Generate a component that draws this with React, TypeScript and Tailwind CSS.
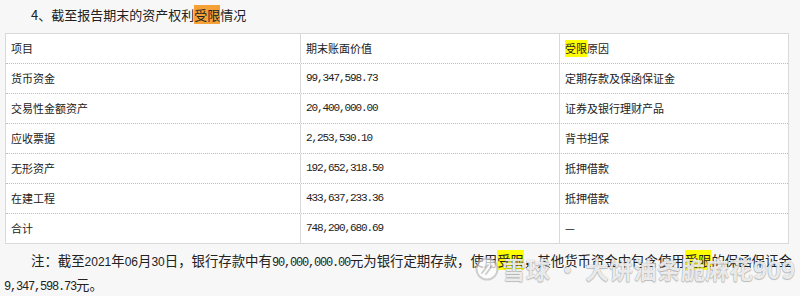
const rows = [
  { item: '货币资金', value: '99,347,598.73', reason: '定期存款及保函保证金' },
  { item: '交易性金额资产', value: '20,400,000.00', reason: '证券及银行理财产品' },
  { item: '应收票据', value: '2,253,530.10', reason: '背书担保' },
  { item: '无形资产', value: '192,652,318.50', reason: '抵押借款' },
  { item: '在建工程', value: '433,637,233.36', reason: '抵押借款' },
  { item: '合计', value: '748,290,680.69', reason: '—' },
];

const cjk = "font-['SimSun','Noto_Sans_CJK_SC',sans-serif]";
const mono = "font-['Liberation_Mono','Noto_Sans_CJK_SC',monospace]";
const narrow = "font-['Liberation_Sans',sans-serif] text-[12px]";

function Cell({ children, first }: { children: React.ReactNode; first?: boolean }) {
  return (
    <div className={`flex items-center pl-[5px] ${first ? '' : 'border-l border-[#d9d9d9]'}`}>
      {children}
    </div>
  );
}

export default function App() {
  return (
    <div className={`w-[800px] h-[296px] overflow-hidden bg-[#f7f7f7] text-[#222] relative ${cjk}`}>
      {/* title */}
      <div className="h-[33px] pl-[31px] pt-[6px] text-[13px] leading-[18px]">
        4、截至报告期末的资产权利<span className="bg-[#f6a137]">受限</span>情况
      </div>

      {/* table */}
      <div className="ml-[5px] w-[784px] border border-[#d9d9d9] bg-white text-[11px]">
        <div className="grid grid-cols-[294px_259px_1fr] h-[29px]">
          <Cell first>项目</Cell>
          <Cell>期末账面价值</Cell>
          <Cell>
            <span className="bg-[#ffff00]">受限</span>原因
          </Cell>
        </div>
        {rows.map((r) => (
          <div
            key={r.item}
            className="grid grid-cols-[294px_259px_1fr] h-[30px] border-t border-dotted border-[#bdbdbd]"
          >
            <Cell first>{r.item}</Cell>
            <Cell>
              <span className={`${mono} tracking-[-1.1px]`}>{r.value}</span>
            </Cell>
            <Cell>{r.reason}</Cell>
          </div>
        ))}
      </div>

      {/* note */}
      <div className="mt-[6px] text-[13.4px] leading-[21px] whitespace-nowrap">
        <div className="pl-[31px]">
          注：截至<span className={narrow}>2021</span>年<span className={narrow}>06</span>月
          <span className={narrow}>30</span>日，银行存款中有
          <span className={`${mono} text-[12px] tracking-[-1.2px]`}>90,000,000.00</span>
          元为银行定期存款，使用<span className="bg-[#ffff00]">受限</span>，其他货币资金中包含使用
          <span className="bg-[#ffff00]">受限</span>的保函保证金
        </div>
        <div className="pl-[4px]">
          <span className={`${mono} text-[12px] tracking-[-1.2px]`}>9,347,598.73</span>元。
        </div>
      </div>

      {/* watermark */}
      <div className="absolute left-[475px] top-[255px] flex items-center gap-[3px] text-white/85 text-[24px] leading-[28px] font-['Noto_Sans_CJK_SC',sans-serif] font-bold [text-shadow:0_0_1px_rgba(0,0,0,0.45),0_1px_1px_rgba(0,0,0,0.2)]">
        <svg width="24" height="24" viewBox="0 0 24 24" className="opacity-70">
          <circle cx="12" cy="12" r="10.5" fill="white" stroke="#bdbdbd" strokeWidth="2" />
          <path d="M7 16 L13 8 M11 17 L17 9" stroke="#bdbdbd" strokeWidth="2" fill="none" strokeLinecap="round" />
        </svg>
        <span>雪球 · 大饼油条脆麻花909</span>
      </div>
    </div>
  );
}
